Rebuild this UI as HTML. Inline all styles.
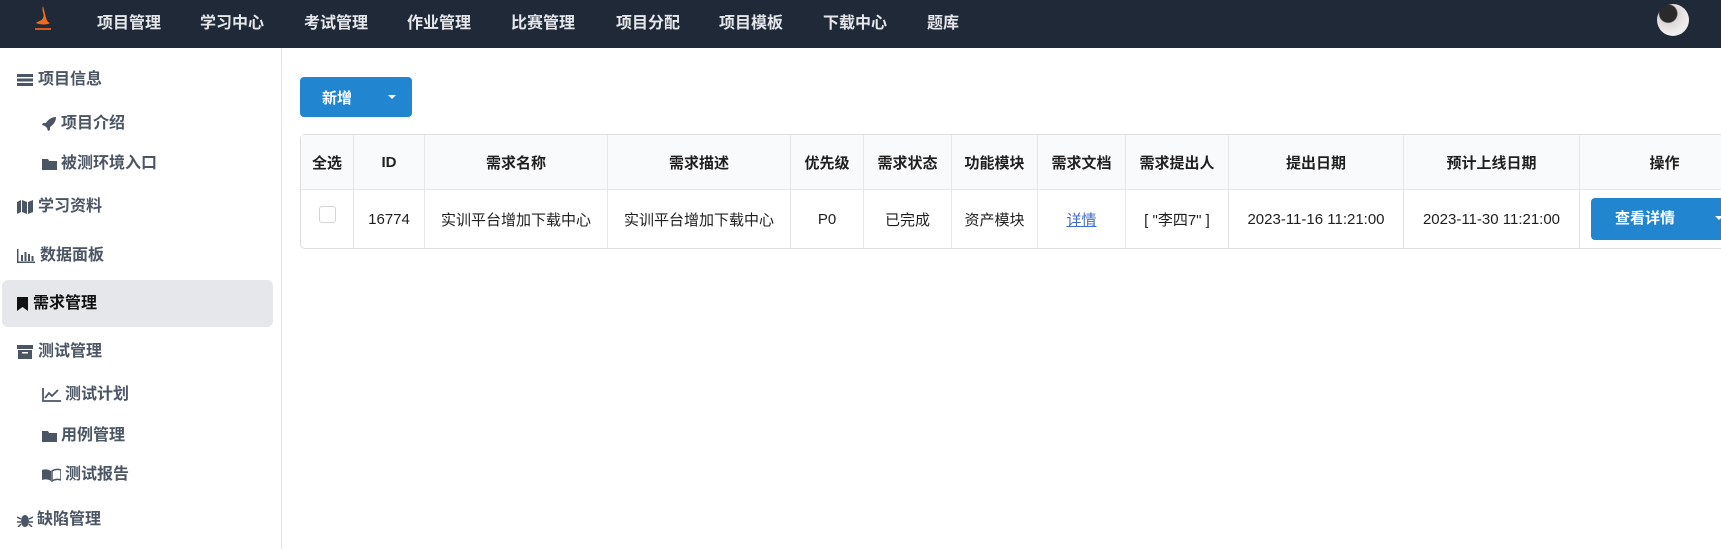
<!DOCTYPE html>
<html><head><meta charset="utf-8"><style>
*{box-sizing:border-box;margin:0;padding:0}
body{width:1721px;height:549px;overflow:hidden;background:#fff;font-family:"Liberation Sans","Noto Sans CJK SC",sans-serif;position:relative}
.top{position:absolute;left:0;top:0;width:1721px;height:48px;background:#1f2937}
.nav{position:absolute;top:0;height:48px;line-height:48px;color:#e5e7eb;font-size:16px;font-weight:bold}
.av{position:absolute;left:1657px;top:4px;width:32px;height:32px;border-radius:50%;background:radial-gradient(circle at 35% 30%,#2a2a2a 0 28%,#ddd8d8 32%,#f3f0f0 70%,#bbb)}
.side{position:absolute;left:0;top:48px;width:282px;height:501px;border-right:1px solid #e5e7eb}
.it{position:absolute;font-size:16px;font-weight:bold;color:#4b5563;height:24px;line-height:24px;white-space:nowrap}
.it svg{position:absolute;left:0;top:5px}
.act{position:absolute;left:2px;top:232px;width:271px;height:47px;background:#e5e7eb;border-radius:6px}
.btn{position:absolute;left:300px;top:77px;width:112px;height:40px;background:#2185d0;border-radius:4px;color:#fff;font-weight:bold;font-size:15px}
table{position:absolute;left:300px;top:134px;width:1449px;border-collapse:separate;border-spacing:0;border:1px solid #dededf;border-radius:5px;font-size:15px;color:#1f1f1f;table-layout:fixed}
th{background:#f9fafb;height:55px;font-weight:bold;border-right:1px solid #e5e7eb;border-bottom:1px solid #e5e7eb}
td{height:58px;text-align:center;border-right:1px solid #e5e7eb;white-space:nowrap}
.dbtn{display:inline-block;width:180px;height:42px;line-height:42px;background:#2185d0;color:#fff;font-weight:bold;border-radius:4px 0 0 4px;text-align:left;padding-left:24px;position:relative;margin-left:11px}
</style></head><body>
<div class="top">
<svg style="position:absolute;left:34px;top:6px" width="18" height="26" viewBox="0 0 18 26"><path d="M9 0C7 5 11 8 9 12C8 15 4 15 2 17C6 19 14 19 16 17C12 16 12 10 9 0Z" fill="#f26a1b"/><rect x="1" y="22" width="16" height="2" fill="#d9581a"/></svg>
<div class="nav" style="left:97px">项目管理</div>
<div class="nav" style="left:200px">学习中心</div>
<div class="nav" style="left:304px">考试管理</div>
<div class="nav" style="left:407px">作业管理</div>
<div class="nav" style="left:511px">比赛管理</div>
<div class="nav" style="left:616px">项目分配</div>
<div class="nav" style="left:719px">项目模板</div>
<div class="nav" style="left:823px">下载中心</div>
<div class="nav" style="left:927px">题库</div>
<div class="av"></div>
</div>
<div class="side">
<div class="act"></div>
<div class="it" style="left:17px;top:20px"><svg width="16" height="14" viewBox="0 0 16 14" fill="#4b5563"><rect y="1" width="16" height="3"/><rect y="5.5" width="16" height="3"/><rect y="10" width="16" height="3"/></svg><span style="margin-left:21px">项目信息</span></div>
<div class="it" style="left:42px;top:64px"><svg width="14" height="14" viewBox="0 0 14 14" fill="#4b5563"><path d="M14 0C9 0 6 3 4 6L1 6 0 8 3 9 5 11 6 14 8 13 8 10C11 8 14 5 14 0Z"/></svg><span style="margin-left:19px">项目介绍</span></div>
<div class="it" style="left:42px;top:104px"><svg width="15" height="14" viewBox="0 0 15 14" fill="#4b5563"><path d="M0 2H6L7 4H15V13H0Z"/></svg><span style="margin-left:19px">被测环境入口</span></div>
<div class="it" style="left:17px;top:147px"><svg width="16" height="14" viewBox="0 0 16 14" fill="#4b5563"><path d="M0 2L4 0V12L0 14ZM5 0L10 2V14L5 12ZM11 2L16 0V12L11 14Z"/></svg><span style="margin-left:21px">学习资料</span></div>
<div class="it" style="left:17px;top:196px"><svg width="18" height="14" viewBox="0 0 18 14" fill="#4b5563"><path d="M0 0H1.5V12.5H18V14H0Z"/><rect x="4" y="6" width="2" height="6"/><rect x="7.5" y="3" width="2" height="9"/><rect x="11" y="5" width="2" height="7"/><rect x="14.5" y="7" width="2" height="5"/></svg><span style="margin-left:23px">数据面板</span></div>
<div class="it" style="left:17px;top:244px;color:#111"><svg width="11" height="14" viewBox="0 0 11 14" fill="#111"><path d="M0 0H11V14L5.5 10 0 14Z"/></svg><span style="margin-left:16px">需求管理</span></div>
<div class="it" style="left:17px;top:292px"><svg width="16" height="14" viewBox="0 0 16 14" fill="#4b5563"><rect y="0" width="16" height="4"/><path d="M1 5H15V14H1ZM5 7V8.5H11V7Z" fill-rule="evenodd"/></svg><span style="margin-left:21px">测试管理</span></div>
<div class="it" style="left:42px;top:335px"><svg width="19" height="14" viewBox="0 0 19 14" fill="none" stroke="#4b5563" stroke-width="1.8"><path d="M1 0V13H19"/><path d="M3 10L7 5 10 8 16 2"/></svg><span style="margin-left:23px">测试计划</span></div>
<div class="it" style="left:42px;top:376px"><svg width="15" height="14" viewBox="0 0 15 14" fill="#4b5563"><path d="M0 2H6L7 4H15V13H0Z"/></svg><span style="margin-left:19px">用例管理</span></div>
<div class="it" style="left:42px;top:415px"><svg width="19" height="14" viewBox="0 0 19 14" fill="#4b5563"><path d="M0 2C3 1 6 1 9 3V13C6 11 3 11 0 12Z"/><path d="M10 3C13 1 16 1 19 2V12C16 11 13 11 10 13Z" fill="none" stroke="#4b5563" stroke-width="1.5"/></svg><span style="margin-left:23px">测试报告</span></div>
<div class="it" style="left:17px;top:460px"><svg width="16" height="14" viewBox="0 0 16 14" fill="#4b5563"><ellipse cx="8" cy="8" rx="4" ry="6"/><path d="M0 4L4 6M16 4L12 6M0 9H4M16 9H12M1 14L4 11M15 14L12 11" stroke="#4b5563" stroke-width="1.5"/></svg><span style="margin-left:20px">缺陷管理</span></div>
</div>
<div class="btn"><span style="position:absolute;left:22px;top:10px">新增</span><svg style="position:absolute;left:88px;top:18px" width="8" height="5"><path d="M0 0H8L4 4Z" fill="#fff"/></svg></div>
<table>
<colgroup><col style="width:53px"><col style="width:71px"><col style="width:183px"><col style="width:183px"><col style="width:73px"><col style="width:88px"><col style="width:86px"><col style="width:88px"><col style="width:103px"><col style="width:175px"><col style="width:176px"><col style="width:170px"></colgroup>
<tr><th>全选</th><th>ID</th><th>需求名称</th><th>需求描述</th><th>优先级</th><th>需求状态</th><th>功能模块</th><th>需求文档</th><th>需求提出人</th><th>提出日期</th><th>预计上线日期</th><th>操作</th></tr>
<tr><td><span style="display:inline-block;width:17px;height:17px;border:1px solid #d4d4d5;border-radius:3px;vertical-align:middle;margin-top:-10px"></span></td><td>16774</td><td>实训平台增加下载中心</td><td>实训平台增加下载中心</td><td>P0</td><td>已完成</td><td>资产模块</td><td><span style="color:#4169c9;text-decoration:underline">详情</span></td><td>[ "李四7" ]</td><td>2023-11-16 11:21:00</td><td>2023-11-30 11:21:00</td><td style="text-align:left"><span class="dbtn">查看详情<svg style="position:absolute;left:124px;top:18px" width="8" height="5"><path d="M0 0H8L4 4Z" fill="#fff"/></svg></span></td></tr>
</table>
</body></html>
